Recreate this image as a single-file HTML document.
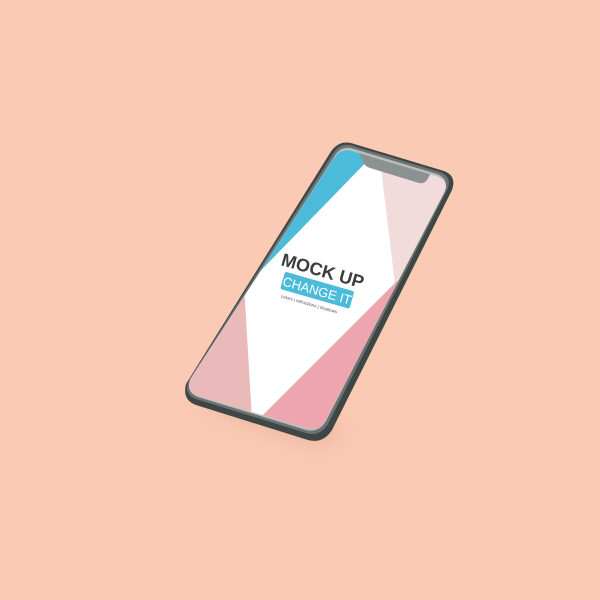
<!DOCTYPE html>
<html><head><style>
html,body{margin:0;padding:0;width:600px;height:600px;overflow:hidden;background:#fbcab4;}
</style></head><body>
<svg width="600" height="600" viewBox="0 0 600 600" xmlns="http://www.w3.org/2000/svg">
<defs>
<filter id="sh" x="-50%" y="-50%" width="200%" height="200%"><feGaussianBlur stdDeviation="10"/></filter>
<clipPath id="scr"><path d="M352,151 L436,176 Q450,181 444,193 L326,420 Q319,432 306,428 L198,396 Q185,391 191,378 L334,158 Q341,148 352,151 Z"/></clipPath>
</defs>
<rect width="600" height="600" fill="#fbcab4"/>
<path d="M200,405 L318,446 L348,430 L230,395 Z" fill="#d8a08a" opacity="0.5" filter="url(#sh)"/>
<path d="M351,143 L444,171 Q457,176 452,190 L332,430 Q323,444 308,440 L196,405 Q182,400 186,384 L330,153 Q338,140 351,143 Z" fill="#3f4646"/>
<path d="M350,145 L440,172 Q453,177 447,190 L328,424 Q320,437 306,433 L196,399 Q183,394 189,380 L332,155 Q339,143 350,145 Z" fill="#6c7373"/>
<path d="M351,148 L437,174 Q450,179 444,192 L326,421 Q319,433 306,430 L198,397 Q185,392 191,379 L334,157 Q340,146 351,148 Z" fill="#b9bcbc"/>
<g clip-path="url(#scr)">
<rect x="150" y="130" width="330" height="330" fill="#ffffff"/>
<polygon points="330,140 376,152 240,292 180,300" fill="#4bbbd9"/>
<polygon points="380,160 460,178 460,200 395,284" fill="#f1dcdb"/>
<polygon points="396,282 460,240 340,440 256,422" fill="#eda5b0"/>
<polygon points="244,284 180,300 180,400 252,420" fill="#eab9b9"/>
<path d="M357,149 L432,171 L427,180 Q424,184 419,183 L370,168 Q364,166 363,161 Z" fill="#8c9191"/>
</g>
<g transform="translate(323,270) rotate(16)">
<text x="0" y="7" text-anchor="middle" font-family="Liberation Sans, sans-serif" font-weight="bold" font-size="18" fill="#3d3d3d">MOCK UP</text>
<rect x="-36" y="12" width="72" height="18" rx="2" fill="#4bbbd9"/>
<text x="0" y="26" text-anchor="middle" font-family="Liberation Sans, sans-serif" font-size="13" fill="#ffffff">CHANGE IT</text>
<text x="-4" y="38" text-anchor="middle" font-family="Liberation Sans, sans-serif" font-size="4.5" fill="#555">colors  |  refractions  |  shadows</text>
</g>
</svg>
</body></html>
